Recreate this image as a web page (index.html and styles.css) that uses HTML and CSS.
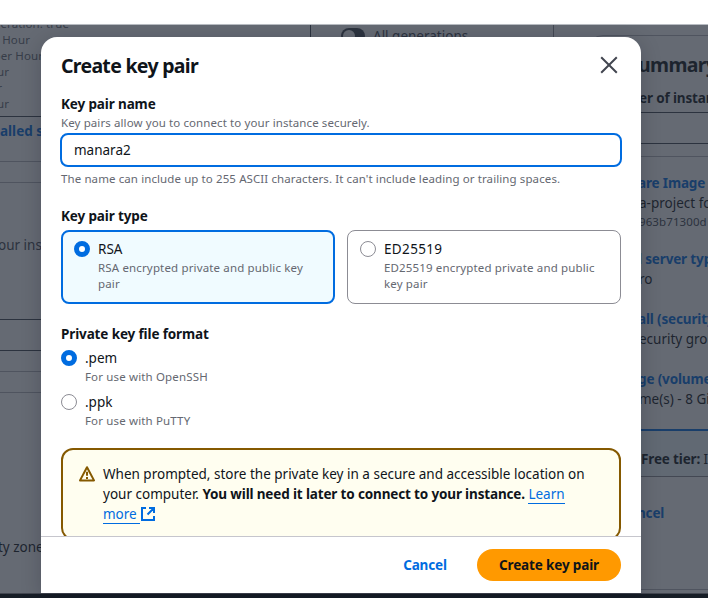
FILE: index.html
```html
<!DOCTYPE html>
<html lang="en">
<head>
<meta charset="utf-8">
<title>Create key pair</title>
<link rel="stylesheet" href="styles.css">
</head>
<body>
<div class="topbar"></div>
<main class="page">
  <section class="left">
    <div class="specs">
      <div class="w1">eration: true</div><div class="w2">Hour</div><div class="w3">per Hour</div><div class="w4">ur</div><div class="w5">r</div><div class="w4">ur</div>
    </div>
    <div class="l-link">alled s</div>
    <div class="l-gap"></div>
    <div class="l-note">our inst</div>
    <div class="l-input"></div>
    <div class="l-gap"></div>
    <div class="l-gap"></div>
    <div class="l-zone">ty zone</div>
  </section>
  <section class="middle"><span class="toggle"><i></i></span><span>All generations</span></section>
  <aside class="summary">
    <h2>ummary</h2>
    <div class="r-label">er of instan</div>
    <div class="r-input"></div>
    <div class="r-list">
      <a>are Image (</a><div>a-project fo</div><small>963b71300d</small>
      <a class="r-next">l server typ</a><div>ro</div>
      <a class="r-next">all (security</a><div>ecurity grou</div>
      <a class="r-next">ge (volumes</a><div>me(s) - 8 Gi</div>
    </div>
    <div class="tier"><b>Free tier:</b> In</div>
    <a class="r-cancel">ncel</a>
  </aside>
</main>
<div class="overlay"></div>
<div class="console"></div>
<div class="modal" role="dialog">
  <header><h1>Create key pair</h1>
    <svg class="close" width="18" height="18" viewBox="0 0 18 18"><path d="M1.2 1.2l15.6 15.6M16.8 1.2L1.2 16.8"/></svg>
  </header>
  <div class="content">
    <h3>Key pair name</h3>
    <p class="hint">Key pairs allow you to connect to your instance securely.</p>
    <input class="field" value="manara2" aria-label="Key pair name">
    <p class="hint">The name can include up to 255 ASCII characters. It can't include leading or trailing spaces.</p>
    <h3 class="type">Key pair type</h3>
    <div class="tiles">
      <div class="tile on"><i class="radio on"></i><div><div>RSA</div><p>RSA encrypted private and public key<br>pair</p></div></div>
      <div class="tile"><i class="radio"></i><div><div class="ed">ED25519</div><p>ED25519 encrypted private and public<br>key pair</p></div></div>
    </div>
    <h3 class="format">Private key file format</h3>
    <div class="option"><i class="radio on"></i><div><div>.pem</div><p>For use with OpenSSH</p></div></div>
    <div class="option"><i class="radio"></i><div><div>.ppk</div><p>For use with PuTTY</p></div></div>
    <div class="alert">
      <svg class="warn" width="16" height="16" viewBox="0 0 16 16"><path d="M8 1.2L15 14.4H1z" stroke-linejoin="round"/><path d="M8 5.8v4M8 11v2"/></svg>
      <div>When prompted, store the private key in a secure and accessible location on<br>your computer. <b>You will need it later to connect to your instance.</b> <a>Learn</a><br><a>more&nbsp;</a><svg class="ext" width="14" height="14" viewBox="0 0 14 14"><path d="M5 1H1v12h12V9M8 1h5v5M13 1L6.5 7.5"/></svg></div>
    </div>
  </div>
  <footer><button class="cancel">Cancel</button><button class="primary">Create key pair</button></footer>
</div>
</body>
</html>
```
FILE: styles.css
```css
* { box-sizing: border-box; }
body { margin: 0; width: 708px; height: 598px; overflow: hidden; position: relative; background: #fff; color: #0f141a; font: 13.5px/20px "Noto Sans", sans-serif; }
h1, h2, h3, p { margin: 0; }
b { letter-spacing: -.15px; }
.topbar { height: 25px; border-bottom: 1px solid #b8bcc2; }
.page { display: grid; grid-template-columns: 311px 243px 154px; height: 568px; overflow: hidden; white-space: nowrap; }
.left { border-right: 1px solid #424650; display: flex; flex-direction: column; }
.specs { height: 92px; flex: none; border-bottom: 1px solid #424650; font-size: 11.5px; letter-spacing: .1px; line-height: 16px; color: #656871; overflow: hidden; }
.specs div { display: flex; justify-content: flex-end; }
.specs div:first-child { margin-top: -9px; }
.w1 { width: 69px; } .w2 { width: 30px; } .w3 { width: 43px; } .w4 { width: 9px; } .w5 { width: 2px; }
.l-link { height: 45px; padding-top: 4px; color: #006ce0; font-weight: 700; border-bottom: 1px solid #b4b4bb; }
.l-gap { height: 21px; border-bottom: 1px solid #b4b4bb; }
.l-note { height: 136px; padding-top: 52px; text-indent: -2px; color: #424650; }
.l-input { height: 32px; border: solid #424650; border-width: 1px 0; }
.l-zone { padding-top: 144px; text-indent: -2px; }
.middle { border-right: 1px solid #8c8c94; padding: 1px 0 0 30px; display: flex; gap: 8px; color: #424650; align-items: flex-start; }
.toggle { width: 24px; height: 16px; border-radius: 8px; background: #424650; padding: 2px; margin-top: 2px; }
.toggle i { display: block; width: 12px; height: 12px; border-radius: 50%; background: #fff; }
.summary { margin: 10px 0 3px 33px; width: 300px; border: 1px solid #b4b4bb; border-radius: 16px; padding-left: 52px; }
.summary h2 { margin-top: 16px; font-size: 19.5px; letter-spacing: -.65px; line-height: 26px; text-indent: -2px; }
.r-label { margin-top: 10px; font-weight: 700; letter-spacing: -.15px; text-indent: -1px; }
.r-input { margin: 4px 0 12px -32px; height: 32px; border: 1px solid #424650; }
.r-list { margin-left: -32px; padding: 16px 0 0 31px; border-top: 1px solid #b4b4bb; height: 273px; }
.r-list a, .r-cancel { display: block; color: #006ce0; font-weight: 700; letter-spacing: -.15px; text-indent: -1px; }
.r-list small { display: block; font-size: 11.5px; letter-spacing: .1px; line-height: 16px; padding-top: 1px; height: 16px; color: #424650; }
.r-list .r-next { margin-top: 20px; }
.tier { height: 48px; margin-left: -32px; padding: 18px 0 0 33px; border-top: 2px solid #006ce0; border-bottom: 1px solid #8c8c94; background: #f0fbff; }
.r-cancel { margin-top: 26px; text-indent: -3px; }
.overlay { position: absolute; inset: 25px 0 5px; background: rgba(35,43,55,.7); }
.console { height: 5px; background: #161d26; border-top: 1px solid #424650; }
.modal { position: absolute; left: 41px; top: 37px; width: 600px; height: 556px; background: #fff; border-radius: 16px 16px 0 0; box-shadow: 0 4px 20px 1px rgba(0,7,22,.18); display: flex; flex-direction: column; }
header { display: flex; justify-content: space-between; padding: 17px 23px 0 20px; height: 57px; flex: none; }
h1 { font-size: 19.5px; line-height: 24px; letter-spacing: -.7px; }
.close { margin-top: 2px; fill: none; stroke: #424650; stroke-width: 2; }
.content { height: 442px; flex: none; overflow: hidden; padding: 0 20px; }
h3 { font-size: 13.5px; line-height: 20px; letter-spacing: -.13px; }
p { font-size: 11.5px; line-height: 16px; letter-spacing: .1px; color: #656871; }
.tile p, .option p { letter-spacing: .15px; }
.hint { margin-top: 1px; white-space: nowrap; }
.field { display: block; width: 562px; height: 34px; margin: 2px -1px 4px; border: 2px solid #006ce0; border-radius: 8px; padding: 0 12px 1px; background: #fff; color: #0f141a; font: 13.5px/20px "Noto Sans", sans-serif; outline: 0; }
.type { margin-top: 19px; }
.tiles { display: grid; grid-template-columns: 1fr 1fr; gap: 12px; margin-top: 4px; }
.tile { height: 74px; border: 1px solid #8c8c94; border-radius: 8px; padding: 8px 12px; display: flex; gap: 8px; white-space: nowrap; }
.ed { letter-spacing: .35px; }
.tile p, .option p { margin-top: 1px; }
.tile.on { border: 2px solid #006ce0; background: #f0fbff; padding: 7px 11px; }
.radio { flex: none; width: 16px; height: 16px; border: 1px solid #8c8c94; border-radius: 50%; background: #fff; margin-top: 2px; }
.radio.on { border: 5px solid #006ce0; }
.format { margin-top: 20px; margin-bottom: 4px; }
.option { display: flex; gap: 8px; height: 44px; }
.alert { margin-top: 12px; height: 92px; border: 2px solid #855900; border-radius: 12px; background: #fffef0; padding: 14px 16px; display: flex; gap: 8px; white-space: nowrap; }
.warn { margin-top: 2px; flex: none; fill: none; stroke: #855900; stroke-width: 2; }
.alert a { color: #006ce0; border-bottom: 1px solid #006ce0; }
.ext { fill: none; stroke: #006ce0; stroke-width: 2; vertical-align: -2px; margin-left: 1px; }
footer { flex: 1; border-top: 1px solid #c6c6cd; display: flex; justify-content: flex-end; padding: 12px 20px; gap: 8px; }
button { height: 32px; border: 0; border-radius: 20px; background: none; font: 700 13.5px/20px "Noto Sans", sans-serif; letter-spacing: -.15px; padding: 0; }
.cancel { color: #006ce0; width: 88px; }
.primary { width: 144px; background: #ff9900; color: #0f141a; }
```
